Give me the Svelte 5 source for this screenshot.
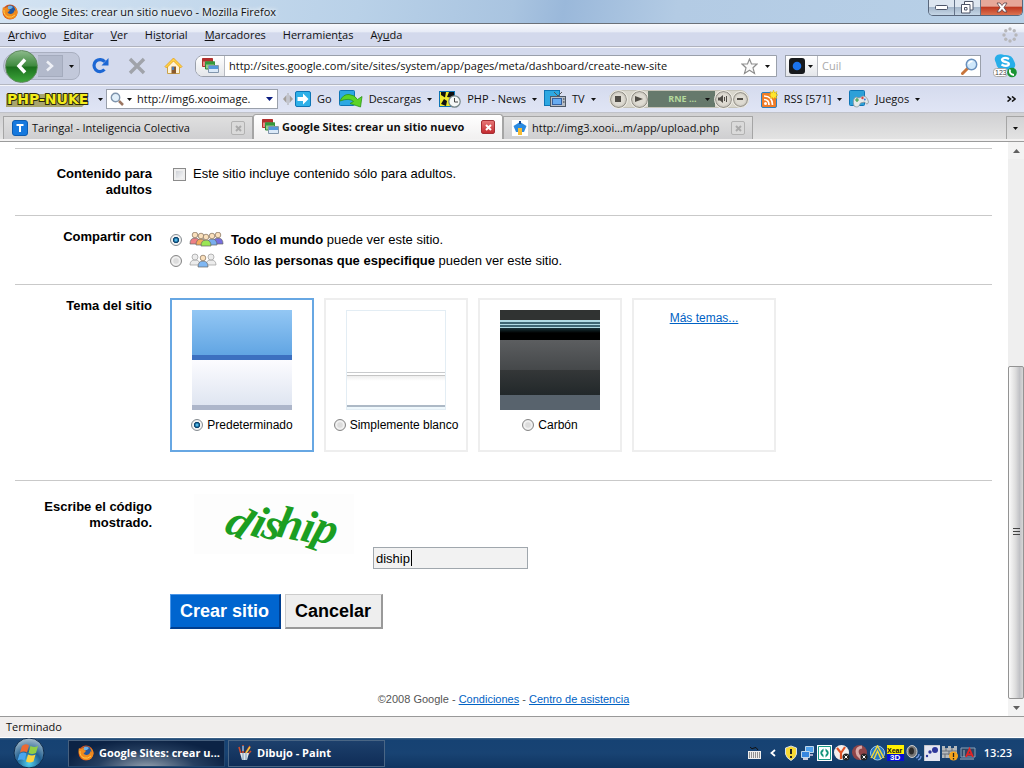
<script>
  const menus = [
    ['', 'A', 'rchivo'],
    ['', 'E', 'ditar'],
    ['', 'V', 'er'],
    ['Hi', 's', 'torial'],
    ['', 'M', 'arcadores'],
    ['Herramien', 't', 'as'],
    ['Ay', 'u', 'da']
  ];

  const themes = [
    { id: 'default', name: 'Predeterminado' },
    { id: 'white', name: 'Simplemente blanco' },
    { id: 'carbon', name: 'Carbón' }
  ];

  const people = [
    { x: 6, y: 3, fill: '#ee8084' },
    { x: 29, y: 3, fill: '#766ee0' },
    { x: 12, y: 4, fill: '#f5ac5c' },
    { x: 23, y: 4, fill: '#79aeee' },
    { x: 17, y: 5, fill: '#9be653' }
  ];

  let url = $state('http://sites.google.com/site/sites/system/app/pages/meta/dashboard/create-new-site');
  let nukeUrl = $state('http://img6.xooimage.');
  let search = $state('');
  let adult = $state(false);
  let share = $state('all');
  let theme = $state('default');
  let code = $state('diship');
</script>

<svelte:head>
  <title>Google Sites: crear un sitio nuevo</title>
</svelte:head>

{#snippet caret(color = '#111')}
  <svg class="caret" width="5" height="3" viewBox="0 0 5 3"><path d="M0 0h5L2.5 3z" fill={color} /></svg>
{/snippet}

{#snippet firefox()}
  <svg width="16" height="16" viewBox="0 0 16 16">
    <circle cx="8" cy="8" r="7.5" fill="#d9541a" />
    <circle cx="8.5" cy="6.5" r="5.3" fill="#23579f" />
    <path d="M6 2q3-1 5 1l-2 2-3 0z" fill="#6bb0e8" />
    <path d="M1 3q1 1 2.500 1 1-1.500 3-1.500-1 1.500-.5 2.500l2 .5-1 2-1.500.5q1 2.500 3.500 2 3-.5 3.500-4l1 1.500q0-3-2-5.500 4.500 3 4 7-1 5.500-6 6-5 .5-7-3.500Q-.5 7.500 1 3z" fill="#f08a1d" />
    <path d="M2 6q-.5 5 4 7 4 1 7-2" fill="none" stroke="#ffc94a" />
  </svg>
{/snippet}

{#snippet sitesIcon()}
  <svg width="17" height="16" viewBox="0 0 17 16">
    <path d="M.5.500h10v8H.5z" fill="#e58a86" stroke="#b22f2c" /><path d="M.5.500h10v3H.5z" fill="#b22f2c" />
    <path d="M3.500 4h9v7h-9z" fill="#8fd08a" stroke="#2c8734" /><path d="M3 3.500h10v3H3z" fill="#35973c" />
    <path d="M6.500 7.500h10v7h-10z" fill="#dbe9f8" stroke="#8296ac" /><path d="M7 8h9v3H7z" fill="#5297dc" />
  </svg>
{/snippet}

{#snippet person(x, y, fill)}
  <path d="M{x - 5} {y + 9}q0-6 5-6t5 6z" {fill} stroke="#666" stroke-width=".7" />
  <circle cx={x} cy={y} r="2.800" fill="#fae0bc" stroke="#806c58" stroke-width=".7" />
{/snippet}

<div class="desktop">
  <header class="titlebar">
    {@render firefox()}
    <span class="title">Google Sites: crear un sitio nuevo - Mozilla Firefox</span>
    <div class="window-buttons">
      <button class="min" aria-label="Minimizar">
        <svg width="13" height="6" viewBox="0 0 13 6"><rect x=".5" y=".5" width="12" height="4" rx="1" fill="#fff" stroke="#4d5568" /></svg>
      </button>
      <button class="max" aria-label="Restaurar">
        <svg width="13" height="13" viewBox="0 0 13 13" fill="none"><path d="M3.500.5h8.500v8.500h-8.500z" stroke="#4d5568" fill="#fff" /><path d="M.5 3.500h8.500v8.500H.5z" stroke="#4d5568" fill="#fff" /><path d="M3.500 6.500h2.500v2.500H3.500z" stroke="#4d5568" /></svg>
      </button>
      <button class="close" aria-label="Cerrar">
        <svg width="12" height="11" viewBox="0 0 12 11"><path d="M1 1h3l2 2.500L8 1h3L8 5.500l3 4.500H8L6 7.500 4 10H1l3-4.500z" fill="#fff" stroke="#573c45" stroke-width=".8" /></svg>
      </button>
    </div>
  </header>

  <nav class="menubar">
    {#each menus as [before, key, after]}
      <button>{before}<u>{key}</u>{after}</button>
    {/each}
    <svg class="throbber" width="16" height="16" viewBox="0 0 16 16" fill="#b7b7ba">
      {#each Array(8) as _, i}
        <circle cx={8 + 6 * Math.cos((i * Math.PI) / 4)} cy={8 + 6 * Math.sin((i * Math.PI) / 4)} r="1.700" />
      {/each}
    </svg>
  </nav>

  <div class="navbar">
    <div class="keyhole">
      <button class="back" aria-label="Atrás">
        <svg width="12" height="16" viewBox="0 0 12 16" fill="none" stroke="#fff" stroke-width="3.500"><path d="M9 1.500L3 8l6 6.500" /></svg>
      </button>
      <button class="forward" aria-label="Adelante">
        <svg width="10" height="12" viewBox="0 0 10 12" fill="none" stroke="#eef0f6" stroke-width="2.500"><path d="M2 1.500L7 6l-5 4.500" /></svg>
      </button>
      <button class="history" aria-label="Historial reciente">{@render caret()}</button>
    </div>
    <button class="tool" aria-label="Recargar">
      <svg width="18" height="18" viewBox="0 0 18 18"><path d="M12.500 12.500a6 6 0 1 1 .2-7.700" fill="none" stroke="#1c67d4" stroke-width="3.200" /><path d="M16.500 1v7.500H9.500z" fill="#1c67d4" /></svg>
    </button>
    <button class="tool" aria-label="Detener">
      <svg width="18" height="18" viewBox="0 0 18 18" stroke="#a0a3aa" stroke-width="3.400"><path d="M2 2l14 14M16 2L2 16" /></svg>
    </button>
    <button class="tool" aria-label="Inicio">
      <svg width="19" height="18" viewBox="0 0 19 18">
        <path d="M3.500 9v7.500h12V9l-6-6z" fill="#fff3d6" stroke="#c9a24b" />
        <path d="M1 9.500L9.500 1 18 9.500l-1.500 1.500-7-7-7 7z" fill="#ffd344" stroke="#e29a1c" stroke-width=".8" />
        <path d="M7.500 9.500h4.500v7H7.500z" fill="#8a5a2c" /><path d="M8 10h2v3H8z" fill="#4a7dbc" />
      </svg>
    </button>
    <div class="urlbar">
      <span class="identity">{@render sitesIcon()}</span>
      <input aria-label="Dirección" bind:value={url} />
      <svg width="17" height="17" viewBox="0 0 17 17"><path d="M8.500 1l2 5h5.500l-4 3.800 1.500 5.700-5-3.200-5 3.200L5 9.800 1 6h5.500z" fill="#fafafa" stroke="#8f8f8f" stroke-width="1.200" /></svg>
      <button class="drop" aria-label="Mostrar historial">{@render caret()}</button>
    </div>
    <div class="searchbox">
      <button class="engine" aria-label="Elegir buscador">
        <svg width="16" height="16" viewBox="0 0 16 16"><rect width="16" height="16" rx="3" fill="#17191c" /><circle cx="8" cy="8" r="4.300" fill="#1b73ee" /></svg>
        {@render caret()}
      </button>
      <input aria-label="Buscar" placeholder="Cuil" bind:value={search} />
      <svg width="17" height="17" viewBox="0 0 17 17"><path d="M1.500 15.500L7 10" stroke="#c8753c" stroke-width="3" stroke-linecap="round" /><circle cx="10.500" cy="6.500" r="5.200" fill="#cfe8fb" stroke="#6990bd" stroke-width="1.500" /><path d="M7.500 6q1-3 4-2.500" stroke="#fff" fill="none" stroke-width="1.500" /></svg>
    </div>
    <button class="skype" aria-label="Skype">
      <svg width="24" height="24" viewBox="0 0 24 24">
        <path d="M4 1q4-1.500 7 0 8-1 10 6 3 5-1 8-4 2-9 1-7 0-8-7-3-5 1-8z" fill="#28aee9" />
        <path d="M16 5q-5-2.500-7 .5 0 2 4 2.500 4 1 2.500 3-2.500 2-7-.5" stroke="#fff" fill="none" stroke-width="2.300" />
        <rect x=".5" y="14.500" width="14" height="8" rx="3" fill="#fff" stroke="#a8a8a8" />
        <text x="2" y="21" font-size="7" fill="#444" font-family="Liberation Sans, sans-serif">123</text>
        <circle cx="19" cy="18.500" r="4.800" fill="#1a9433" /><path d="M17 15.500q-1 5 4 5.500" stroke="#fff" fill="none" stroke-width="1.800" />
      </svg>
    </button>
  </div>

  <div class="bookmarks">
    <button class="nuke" aria-label="PHP-Nuke">
      <svg width="84" height="18" viewBox="0 0 84 18">
        <path d="M1 4h80v9l-4 4H1z" fill="#a8a56d" />
        <text x="2" y="14" font-size="14" font-weight="bold" font-family="DejaVu Sans, sans-serif" fill="#f3ed1d" stroke="#2c2a0c" stroke-width="2" paint-order="stroke">PHP-NUKE</text>
      </svg>
    </button>
    <button class="arrow" aria-label="Menú PHP-Nuke">{@render caret()}</button>
    <div class="combo">
      <svg width="14" height="14" viewBox="0 0 14 14"><circle cx="5.500" cy="5.500" r="4.200" fill="#e1effa" stroke="#7f94ac" stroke-width="1.400" /><path d="M9 9l4 4" stroke="#9b7560" stroke-width="2.500" /></svg>
      {@render caret()}
      <input aria-label="Búsqueda PHP-Nuke" bind:value={nukeUrl} />
      <button aria-label="Abrir lista"><svg width="7" height="4" viewBox="0 0 7 4"><path d="M0 0h7L3.500 4z" fill="#0a1c80" /></svg></button>
    </div>
    <svg class="grip" width="10" height="12" viewBox="0 0 10 12"><path d="M3.500 2v8L0 6zM6.500 2v8L10 6z" fill="#a39f9b" /><path d="M5 0v12" stroke="#aaa" /></svg>
    <button class="mark">
      <svg width="16" height="16" viewBox="0 0 16 16"><rect x=".5" y=".5" width="15" height="15" rx="1.500" fill="#2eb0e8" stroke="#0e75b5" /><path d="M2.500 6H8V2.500L13.500 8 8 13.500V10H2.500z" fill="#fff" /></svg>
      Go
    </button>
    <button class="mark">
      <svg width="24" height="18" viewBox="0 0 24 18"><rect x=".5" y=".5" width="15" height="15" rx="1" fill="#2da8e2" stroke="#0e75b5" /><path d="M1 11q3-7 9-6.500 6 .5 8.500 5l4.500-3-1.500 10.500-10.500-3.500 3.500-2q-4-4-13.500-.5z" fill="#5bd425" stroke="#2c9618" stroke-width=".8" /></svg>
      Descargas {@render caret()}
    </button>
    <button class="mark">
      <svg width="22" height="17" viewBox="0 0 22 17"><rect x=".5" y=".5" width="15" height="15" fill="#eeea2c" stroke="#0e75b5" /><path d="M6 6.500L2 4V1h5zM8 6l2-5h5v6zM5 8l3 2-1 5-5-2z" fill="#111" /><circle cx="15.500" cy="10.500" r="5.700" fill="#f5f8f7" stroke="#76878a" stroke-width="1.200" /><path d="M15.500 7v4h3.500" fill="none" stroke="#444" /></svg>
      PHP - News {@render caret()}
    </button>
    <button class="mark">
      <svg width="22" height="18" viewBox="0 0 22 18"><rect x=".5" y=".5" width="15" height="15" fill="#2da8e2" stroke="#0e75b5" /><path d="M10 2l4 4 4-4" fill="none" stroke="#555" /><rect x="6.500" y="6.500" width="15" height="10" fill="#b6bdc6" stroke="#4f5966" /><rect x="8.500" y="8.500" width="9" height="6" fill="#67abf0" stroke="#3560a0" /><path d="M19 9h1.500M19 12h1.500" stroke="#333" /></svg>
      TV {@render caret()}
    </button>
    <div class="player">
      <button class="round" aria-label="Parar"><svg width="6" height="6"><rect width="6" height="6" fill="#4f4c46" /></svg></button>
      <button class="round" aria-label="Reproducir"><svg width="8" height="6" viewBox="0 0 8 6"><path d="M0 0l8 3-8 3z" fill="#4f4c46" /></svg></button>
      <span class="station">RNE ... {@render caret()}</span>
      <button class="round" aria-label="Volumen"><svg width="10" height="8" viewBox="0 0 10 8"><path d="M0 2.500h2L5 0v8L2 5.500H0z" fill="#4f4c46" /><path d="M6.500 2v4M8.500 1v6" stroke="#4f4c46" /></svg></button>
      <button class="round small" aria-label="Menos"><svg width="6" height="2"><rect width="6" height="2" fill="#4f4c46" /></svg></button>
    </div>
    <button class="mark">
      <svg width="17" height="18" viewBox="0 0 17 18"><rect x=".5" y="2.500" width="15" height="15" rx="1.500" fill="#ef7c28" stroke="#2a7fc0" /><circle cx="4.500" cy="13.500" r="1.500" fill="#fff" /><path d="M3 9.500q5 0 5 5.500M3 6q8.500 0 8.500 9" fill="none" stroke="#fff" stroke-width="1.700" /><path d="M12.500 0l1 2.500L16 1.500 15 4l2 1-2 1 1 2.500-2.500-1-1 1.500-1-1.500L9 8.500 10 6 8 5l2-1-1-2.500 2.500 1z" fill="#ffe62e" stroke="#d9a400" stroke-width=".4" /></svg>
      RSS [571] {@render caret()}
    </button>
    <button class="mark">
      <svg width="20" height="18" viewBox="0 0 20 18"><rect x=".5" y=".5" width="15" height="15" rx="1" fill="#2da0d8" stroke="#0e75b5" /><path d="M5 16q-2-7 2-9l3 1 4-2q4 0 5.500 6-1 4-4 0l-4 1q-2 6-6.500 3z" fill="#e5e9e9" stroke="#8a9699" stroke-width=".8" /><path d="M8 8v4M6 10h4" stroke="#3c9d48" stroke-width="1.200" /><circle cx="13.500" cy="8" r="1.200" fill="#d64444" /><circle cx="15.800" cy="9.500" r="1" fill="#3e75d6" /></svg>
      Juegos {@render caret()}
    </button>
    <button class="more" aria-label="Más marcadores">
      <svg width="9" height="6" viewBox="0 0 9 6" fill="none" stroke="#111" stroke-width="1.600"><path d="M.5.5L3.500 3l-3 2.500M5 .5L8 3 5 5.500" /></svg>
    </button>
  </div>

  <div class="tabs">
    <div class="tab">
      <svg width="16" height="16" viewBox="0 0 16 16"><rect x=".5" y=".5" width="15" height="15" rx="2.500" fill="#1679de" stroke="#0d5cb0" /><path d="M4.500 5h7M8 5v7" stroke="#fff" stroke-width="2" /></svg>
      <span>Taringa! - Inteligencia Colectiva</span>
      <button class="tab-close" aria-label="Cerrar pestaña"><svg width="7" height="7" viewBox="0 0 7 7"><path d="M1 1l5 5M6 1L1 6" /></svg></button>
    </div>
    <div class="tab active">
      {@render sitesIcon()}
      <span>Google Sites: crear un sitio nuevo</span>
      <button class="tab-close" aria-label="Cerrar pestaña"><svg width="7" height="7" viewBox="0 0 7 7"><path d="M1 1l5 5M6 1L1 6" /></svg></button>
    </div>
    <div class="tab">
      <svg width="16" height="16" viewBox="0 0 16 16"><path d="M0 0h16v16H0z" fill="#fff" /><path d="M1.500 6L8 2l6.500 4L12 12H4z" fill="#2b8ae0" /><path d="M7 1h2v3H7z" fill="#174a94" /><path d="M6 8h4v7H6z" fill="#f7bd36" /></svg>
      <span>http://img3.xooi...m/app/upload.php</span>
      <button class="tab-close" aria-label="Cerrar pestaña"><svg width="7" height="7" viewBox="0 0 7 7"><path d="M1 1l5 5M6 1L1 6" /></svg></button>
    </div>
    <button class="all-tabs" aria-label="Listar pestañas">{@render caret()}</button>
  </div>

  <div class="viewport">
    <main>
      <form onsubmit={(e) => e.preventDefault()}>
        <div class="row roomy">
          <div class="label">Contenido para adultos</div>
          <div class="field">
            <label class="adult"><input type="checkbox" bind:checked={adult} /> Este sitio incluye contenido sólo para adultos.</label>
          </div>
        </div>

        <div class="row">
          <div class="label">Compartir con</div>
          <div class="field shares">
            <label class="share">
              <input type="radio" name="share" value="all" bind:group={share} />
              <svg width="35" height="15" viewBox="0 0 35 15">
                {#each people as p}{@render person(p.x, p.y, p.fill)}{/each}
              </svg>
              <span><b>Todo el mundo</b> puede ver este sitio.</span>
            </label>
            <label class="share">
              <input type="radio" name="share" value="some" bind:group={share} />
              <svg width="28" height="15" viewBox="0 0 28 15">
                <g fill="#ececec" stroke="#a5a5a5" stroke-width=".8">
                  <path d="M1 12q0-5 5-5t5 5zM17 12q0-5 5-5t5 5z" /><circle cx="6" cy="4" r="3" /><circle cx="22" cy="4" r="3" />
                </g>
                {@render person(14, 5, '#7fb7f3')}
              </svg>
              <span>Sólo <b>las personas que especifique</b> pueden ver este sitio.</span>
            </label>
          </div>
        </div>

        <div class="row">
          <div class="label">Tema del sitio</div>
          <div class="field themes">
            {#each themes as t}
              <label class="card" class:selected={theme === t.id}>
                <span class="thumb {t.id}"></span>
                <span class="theme-name"><input type="radio" name="theme" value={t.id} bind:group={theme} />{t.name}</span>
              </label>
            {/each}
            <div class="card"><a href="#temas">Más temas...</a></div>
          </div>
        </div>

        <div class="row last">
          <label class="label" for="code">Escribe el código mostrado.</label>
          <div class="field">
            <div class="captcha">
              <svg width="160" height="60" viewBox="0 0 160 60" role="img" aria-label="Código">
                <path d="M0 0h160v60H0z" fill="#fdfdfd" />
                <text x="29 55 66 81 105 117" y="37 41 42 42 46 45" rotate="26 18 20 12 14 18" font-family="Liberation Serif, serif" font-style="italic" font-weight="bold" font-size="46" fill="#1b9e22">diship</text>
              </svg>
              <span class="code">
                <input id="code" type="text" autocomplete="off" bind:value={code} />
                <i></i>
              </span>
            </div>
            <div class="actions">
              <button class="create" type="submit">Crear sitio</button>
              <button class="cancel" type="button">Cancelar</button>
            </div>
          </div>
        </div>
      </form>
      <footer>©2008 Google - <a href="#condiciones">Condiciones</a> - <a href="#asistencia">Centro de asistencia</a></footer>
    </main>
    <div class="scrollbar">
      <button aria-label="Subir"><svg width="7" height="4" viewBox="0 0 7 4"><path d="M0 4L3.500 0 7 4z" fill="#606060" /></svg></button>
      <div class="track"></div>
      <div class="handle"><svg width="7" height="8" viewBox="0 0 7 8"><path d="M0 .5h7M0 3.500h7M0 6.500h7" stroke="#444" /></svg></div>
      <button aria-label="Bajar"><svg width="7" height="4" viewBox="0 0 7 4"><path d="M0 0L3.500 4 7 0z" fill="#606060" /></svg></button>
    </div>
  </div>

  <div class="status">Terminado</div>

  <div class="taskbar">
    <button class="start" aria-label="Inicio">
      <svg width="32" height="30" viewBox="0 0 32 30">
        <defs><radialGradient id="orb" cx=".5" cy=".85" r=".8"><stop offset="0" stop-color="#4fd2f0" /><stop offset=".5" stop-color="#205f91" /><stop offset="1" stop-color="#9bb5c7" /></radialGradient></defs>
        <circle cx="16" cy="15" r="15" fill="url(#orb)" stroke="#102c4c" />
        <path d="M9 8q3.500-3 7-.5l-2 7q-3-2-7 0z" fill="#ec6a32" /><path d="M17.500 8q4 2 7.500 0l-2 7q-4 2-7.500 0z" fill="#92cf45" />
        <path d="M6.500 16q4-2.500 7-.5l-2 7q-3-2-7 0z" fill="#48a5ee" /><path d="M15 16.500q4 2 7.500 0l-2 7q-4 2-7.500 0z" fill="#fcd340" />
      </svg>
    </button>
    <button class="task current">{@render firefox()} Google Sites: crear u...</button>
    <button class="task">
      <svg width="14" height="16" viewBox="0 0 14 16"><path d="M3 9L1 2M5 8V0M7 9l5-8M9 10l4-4" stroke="#d04b2c" stroke-width="1.600" /><path d="M5 6V1" stroke="#6ab4f0" stroke-width="1.500" /><path d="M8 8l4-6" stroke="#f0c840" stroke-width="1.500" /><path d="M2 8h9l-2 7H4z" fill="#dde4ea" /><path d="M5 8v7M8 8v7" stroke="#7b9ab2" /></svg>
      Dibujo - Paint
    </button>
    <div class="tray">
      <svg width="13" height="12" viewBox="0 0 13 12"><path d="M2 0q2 3 4 1t4 2" fill="none" stroke="#111" /><path d="M0 4h13v8H0z" fill="#eee" /><path d="M1 6h11M1 8h11M1 10h11" stroke="#333" stroke-dasharray="1 1" /></svg>
      <svg class="chevron" width="6" height="8" viewBox="0 0 6 8" fill="none" stroke="#fff" stroke-width="1.800"><path d="M5 1L1.500 4 5 7" /></svg>
      <svg width="14" height="16" viewBox="0 0 14 16"><path d="M7 1l5.500 2v6q-1 4-5.500 6.500Q2.500 13 1.500 9V3z" fill="#f7d934" stroke="#d8e0e6" /><path d="M7 4v5M7 11v2" stroke="#222" stroke-width="2" /></svg>
      <svg width="15" height="16" viewBox="0 0 15 16"><path d="M5.500 1.500h8v6h-8z" fill="#4fa1ec" stroke="#c0d7eb" /><path d="M8 9h5v2H8z" fill="#aac" /><path d="M1.500 6.500h8v6h-8z" fill="#3686df" stroke="#c0d7eb" /><path d="M3 13h5v2H3z" fill="#ccd" /></svg>
      <svg width="15" height="16" viewBox="0 0 15 16"><path d="M0 0h15v16H0z" fill="#fff" /><path d="M1.500 1.500h12v13h-12z" fill="none" stroke="#1a9b85" /><path d="M6.500 3.500Q0 8 6.500 12.500V10L5 8l1.500-2zM8.500 3.500q6.500 4.500 0 9V10L10 8 8.500 6z" fill="#14937b" /></svg>
      <svg width="16" height="16" viewBox="0 0 16 16"><circle cx="7.500" cy="7.500" r="7.500" fill="#f3efed" /><path d="M3 3l4 5 4-6M7 8v6" fill="none" stroke="#e05326" stroke-width="2.200" /><circle cx="12" cy="12" r="3.500" fill="#222" /><path d="M10.500 10.500l3 3M13.500 10.500l-3 3" stroke="#fff" /></svg>
      <svg width="16" height="16" viewBox="0 0 16 16"><circle cx="7.500" cy="7.500" r="7.500" fill="#8e4448" /><path d="M10 2q-7 1-4 8l4 4" fill="none" stroke="#d8a9a8" stroke-width="3" /><circle cx="12" cy="12" r="3.500" fill="#222" /><path d="M10.500 10.500l3 3M13.500 10.500l-3 3" stroke="#fff" /></svg>
      <svg width="15" height="16" viewBox="0 0 15 16"><circle cx="7.500" cy="8" r="7" fill="#2777c4" stroke="#9cc9ed" /><path d="M1 13L7.500 1 14 13M4 14l3.500-8L11 14" fill="none" stroke="#f0d83a" stroke-width="1.500" /></svg>
      <svg width="17" height="16" viewBox="0 0 17 16" font-family="Liberation Sans, sans-serif" font-weight="bold"><path d="M0 0h17v9H0z" fill="#ffef00" /><path d="M0 9h17v7H0z" fill="#0710d4" /><text x="0" y="8" font-size="7" fill="#111">Xear</text><text x="3" y="15" font-size="8" fill="#fff">3D</text></svg>
      <svg width="16" height="16" viewBox="0 0 16 16"><ellipse cx="6" cy="6.500" rx="5" ry="6" fill="#777" stroke="#ccc" /><ellipse cx="5.500" cy="6" rx="2.500" ry="3.500" fill="#2b2b2b" /><path d="M10 13q3-1 3-4M12 15q3-1 3-4" fill="none" stroke="#6e94dd" stroke-width="1.300" /></svg>
      <svg width="16" height="16" viewBox="0 0 16 16"><path d="M0 0h16v16H0z" fill="#e4e6f2" /><path d="M0 16V0h16" fill="none" stroke="#aaa" /><circle cx="3" cy="11" r="1.200" fill="#2d369b" /><circle cx="6" cy="7" r="1.700" fill="#2d369b" /><circle cx="11" cy="5" r="3" fill="#2d369b" /></svg>
      <svg width="16" height="16" viewBox="0 0 16 16"><path d="M0 1h3v2h3V1h3v2h3V1h3v12H0z" fill="#b5babd" /><path d="M0 6h15M0 9h15M4 3v3M10 3v3M7 6v4M3 9v4" stroke="#666f79" /><circle cx="11.500" cy="11" r="4.500" fill="#f5a51d" /><path d="M11.500 8v4M11.500 13v1.500" stroke="#222" stroke-width="1.300" /></svg>
      <svg width="16" height="16" viewBox="0 0 16 16"><path d="M1 3h14v9H1z" fill="#2d4665" stroke="#8aa0b8" /><path d="M0 14h14M4 5v7" stroke="#a9b2bc" /><path d="M6 12l3.500-8L13 12M7.500 9.500h4" fill="none" stroke="#e52324" stroke-width="1.800" /></svg>
      <time>13:23</time>
    </div>
  </div>
</div>

<style>
  :global(body) { margin: 0; }
  .desktop { display: flex; flex-direction: column; min-height: 100vh; font: 11px/16px "Open Sans", "Noto Sans", sans-serif; color: #111; background: #fff; }
  .desktop * { box-sizing: border-box; }
  svg { display: block; flex: none; }
  button { margin: 0; padding: 0; border: 0; background: none; font: inherit; color: inherit; white-space: nowrap; }
  input { font: inherit; color: inherit; margin: 0; }

  .titlebar { display: flex; align-items: center; gap: 4px; height: 24px; padding-left: 2px; background: linear-gradient(100deg, #d3e3f2 0%, #b9d1e8 35%, #a9c4e0 50%, #9ab8da 55%, #b3cbe4 66%, #b8d0e7 100%); border-bottom: 1px solid #6b7179; }
  .title { flex: 1; text-shadow: 0 0 5px #fff, 0 0 5px #fff; }
  .window-buttons { display: flex; align-self: flex-start; height: 16px; margin-right: 1px; border: 1px solid #59677c; border-top: 0; border-radius: 0 0 5px 5px; overflow: hidden; }
  .window-buttons button { display: grid; place-items: center; width: 26px; background: linear-gradient(#dde6f0 45%, #a5b7cb 50%, #c5d6e6); border-right: 1px solid #65748a; }
  .window-buttons .close { width: 41px; background: linear-gradient(#e6a799 40%, #bf3a22 50%, #dc7250); border: 0; }

  .menubar { display: flex; align-items: center; gap: 17px; height: 23px; padding: 0 6px 0 8px; background: linear-gradient(#f7f9fd, #e7ebf6 36%, #d3d9ec 40%); border-bottom: 1px solid #afb2bd; }
  .throbber { margin-left: auto; }

  .navbar { display: flex; align-items: center; height: 38px; padding: 0 7px 0 3px; background: #d4daed; border-top: 1px solid #f4f5fa; border-bottom: 1px solid #b4b7c1; }
  .keyhole { display: flex; align-items: center; width: 77px; height: 28px; margin-right: 12px; border: 1px solid #a9afc0; border-radius: 14px 8px 8px 14px; background: #c2c8da; }
  .back { display: grid; place-items: center; width: 33px; height: 33px; margin-left: 1px; flex: none; border: 1px solid #5f8a5c; border-radius: 50%; background: linear-gradient(#8bb98a, #3f8a3f 48%, #1b701d 52%, #3da53b); }
  .forward { display: grid; place-items: center; width: 26px; height: 22px; background: #b2b9cb; border: 1px solid #a4abbd; border-left: 0; }
  .history { display: grid; place-items: center; width: 16px; height: 26px; }
  .tool { margin-right: 18px; }
  .urlbar, .searchbox { display: flex; align-items: center; height: 22px; border: 1px solid #9aa0ab; background: #fff; }
  .urlbar { flex: 1; margin: 0 8px 0 -6px; border-radius: 8px 0 0 8px; overflow: hidden; }
  .identity { display: grid; place-items: center; width: 29px; height: 20px; background: linear-gradient(#fff, #e4e6ea); border-right: 1px solid #b8bbc2; }
  .urlbar input, .searchbox input, .combo input { flex: 1; min-width: 0; border: 0; outline: 0; padding: 0 4px; background: none; }
  .searchbox input::placeholder { color: #a9a9a9; opacity: 1; }
  .drop { display: grid; place-items: center; width: 18px; height: 20px; }
  .searchbox { width: 196px; padding-right: 2px; }
  .engine { display: flex; align-items: center; gap: 3px; height: 20px; padding: 0 4px 0 3px; background: linear-gradient(#fff, #e4e6ea); border-right: 1px solid #b8bbc2; }
  .skype { margin-left: 12px; }

  .bookmarks { display: flex; align-items: center; height: 28px; padding: 0 8px 0 5px; background: linear-gradient(#d5dbee, #e0e5f5); border-top: 1px solid #f4f5fa; border-bottom: 1px solid #c0c2c9; }
  .arrow { width: 18px; height: 20px; display: grid; place-items: center; margin-left: 2px; }
  .combo { display: flex; align-items: center; gap: 3px; width: 172px; height: 20px; margin-left: -3px; padding: 0 4px 0 3px; border: 1px solid #9aa0ab; background: #fff; }
  .combo input { padding: 0 2px; }
  .grip { margin: 0 2px 0 5px; }
  .mark { display: flex; align-items: center; gap: 6px; margin-right: 7px; }
  .player { display: flex; align-items: center; width: 140px; height: 18px; margin: 0 12px 0 6px; border: 1px solid #c5c3b8; border-radius: 9px; background: #d8d6cc; }
  .round { display: grid; place-items: center; width: 17px; height: 17px; flex: none; border: 1px solid #8d8a82; border-radius: 50%; outline: 1px solid #efede5; background: radial-gradient(#dedbd2 50%, #a8a59c); }
  .round + .round:not(.small) { margin-left: 4px; }
  .round.small { width: 15px; height: 15px; margin-left: 1px; }
  .station { display: flex; flex: 1; align-items: center; justify-content: flex-end; gap: 8px; height: 16px; padding-right: 5px; background: #66796c; color: #b4d99c; font-size: 9px; font-weight: bold; }
  .more { margin-left: auto; }

  .tabs { display: flex; align-items: flex-end; height: 29px; padding: 2px 0 2px 3px; background: linear-gradient(#d0d0d2, #e4e4e4); border-bottom: 1px solid #9b9b9b; box-shadow: inset 0 -2px #f3f2f2; }
  .tab { display: flex; align-items: center; gap: 4px; width: 250px; height: 23px; padding: 0 7px 0 8px; border: 1px solid #a5a5a5; border-bottom: 0; background: linear-gradient(#dfdfdf, #cfcfd1); white-space: nowrap; }
  .tab span { flex: 1; }
  .tab.active { height: 25px; gap: 3px; border-radius: 3px 3px 0 0; background: linear-gradient(#fff, #f1f0f0); font-weight: bold; }
  .tab-close { display: grid; place-items: center; width: 14px; height: 14px; border: 1px solid #b2b2b2; border-radius: 2px; background: #dadada; }
  .tab-close path { stroke: #aaa; stroke-width: 2; }
  .active .tab-close { background: linear-gradient(#e77777, #c42b30); border-color: #a52f35; }
  .active .tab-close path { stroke: #fff; }
  .all-tabs { display: grid; place-items: center; width: 18px; height: 23px; margin-left: auto; border: 1px solid #a5a5a5; border-width: 1px 0 0 1px; }

  .viewport { display: flex; flex: 1; }
  main { flex: 1; padding: 6px 16px 8px 15px; font: 13px/16px "Liberation Sans", Arial, sans-serif; color: #000; }
  .row { display: grid; grid-template-columns: 137px 1fr; gap: 18px; padding: 13px 0 14px; border-top: 1px solid #c9c9c9; }
  .row.roomy { padding: 17px 0; }
  .row.last { padding-bottom: 0; }
  .label { text-align: right; font-weight: bold; }
  .row.last .label { margin-top: 5px; }
  a { color: #0062c4; }
  input[type='radio'] { appearance: none; width: 12px; height: 12px; flex: none; border: 1px solid #858585; border-radius: 50%; background: radial-gradient(#dcdcdc 30%, #f4f4f4 55%, #c8c8c8); }
  input[type='radio']:checked { border-color: #858b90; background: radial-gradient(circle at 50% 50%, #58c2ef 0 8%, #0a4a7a 34%, #0a3d66 40%, #f2f2f2 48%); }
  input[type='checkbox'] { appearance: none; width: 13px; height: 13px; flex: none; border: 1px solid #8b8b8b; background: linear-gradient(135deg, #c5c8cf, #fff); box-shadow: inset 0 0 0 2px #eee; }
  .adult { display: flex; align-items: center; gap: 7px; padding-left: 3px; }
  .shares { margin-bottom: -1px; }
  .share { display: flex; align-items: center; gap: 7px; height: 21px; }
  .themes { display: flex; gap: 10px; padding-bottom: 14px; }
  .card { display: flex; flex-direction: column; align-items: center; width: 144px; height: 154px; padding-top: 10px; border: 2px solid #eee; font-size: 12px; }
  .card.selected { border-color: #67a7e3; }
  .thumb { width: 100px; height: 100px; }
  .theme-name { display: flex; align-items: center; gap: 4px; margin-top: 7px; white-space: nowrap; }
  .thumb.default { background: linear-gradient(#93c7f4, #61a5e3 45px, #3c70c0 45px 50px, #fcfcff 50px, #dfe5f1 95px, #adb6ca 95px); }
  .thumb.white { border: 1px solid #e3edf4; background: linear-gradient(#fff 61px, #c9cbcd 61px 62px, #fff 62px 64px, #c5c5c5 64px 65px, #eee 65px, #fff 70px 94px, #adb9c6 94px 96px, #eff8fc 96px); }
  .thumb.carbon { background: linear-gradient(#303332 10px, #aedbe4 10px 12px, #3c6774 12px 14px, #aedbe4 14px 15px, #3c6774 15px 17px, #aedbe4 17px 18px, #173238 18px, #000 23px 30px, #5c5e60 30px, #45484a 60px, #343738 60px, #22282a 85px, #58636d 85px); }
  .captcha { display: flex; align-items: flex-end; gap: 19px; height: 75px; padding-left: 24px; }
  .captcha svg { align-self: flex-start; overflow: visible; }
  .code { position: relative; }
  .code input { display: block; width: 155px; height: 22px; padding: 0 2px; border: 1px solid #a0a7ad; border-radius: 0; background: #f2f2f2; outline: 0; }
  .code i { position: absolute; left: 38px; top: 3px; width: 1px; height: 16px; background: #000; }
  .actions { display: flex; gap: 4px; margin-top: 25px; }
  .actions button { height: 35px; padding: 0 10px 0 9px; border: 1px solid #ccc; border-right: 2px solid #999; border-bottom: 2px solid #999; background: #eee; font: bold 18px/24px "Liberation Sans", Arial, sans-serif; }
  .actions .create { border-color: #4b96e8 #003e8f #003e8f #4b96e8; background: #0065cf; color: #fff; }
  footer { margin-top: 62px; text-align: center; font-size: 11px; color: #555; }

  .scrollbar { display: flex; flex-direction: column; width: 16px; background: #efefef; }
  .scrollbar button { display: grid; place-items: center; height: 17px; background: #f3f3f3; }
  .track { flex: 207; }
  .handle { flex: 332; display: grid; place-items: center; border: 1px solid #939393; border-radius: 2px; background: linear-gradient(90deg, #fafafa, #dedede 45%, #c1c2c6 75%, #d6d6d6); }

  .status { height: 22px; padding: 2px 6px; border-top: 1px solid #999; border-bottom: 1px solid #fff; background: #f0eeed; }
  .taskbar { display: flex; align-items: center; height: 30px; padding: 0 12px 0 13px; background: linear-gradient(#47698c, #164273 2px, #184373 50%, #103561); color: #fff; }
  .start { margin-right: 23px; }
  .task { display: flex; align-items: center; gap: 5px; width: 157px; height: 27px; margin-right: 3px; padding-left: 9px; border: 1px solid #4a6685; background: linear-gradient(#1d406c, #0f2d57); font-weight: bold; }
  .task.current { background: radial-gradient(ellipse at 50% 110%, #96a3b0, #263f60 45%, #0c2345 75%); border-color: #47607e #23466d #23466d #47607e; }
  .tray { display: flex; align-items: center; gap: 2px; margin-left: auto; }
  .chevron { margin: 0 6px 0 7px; }
  time { margin-left: 6px; font-weight: 600; }
</style>
